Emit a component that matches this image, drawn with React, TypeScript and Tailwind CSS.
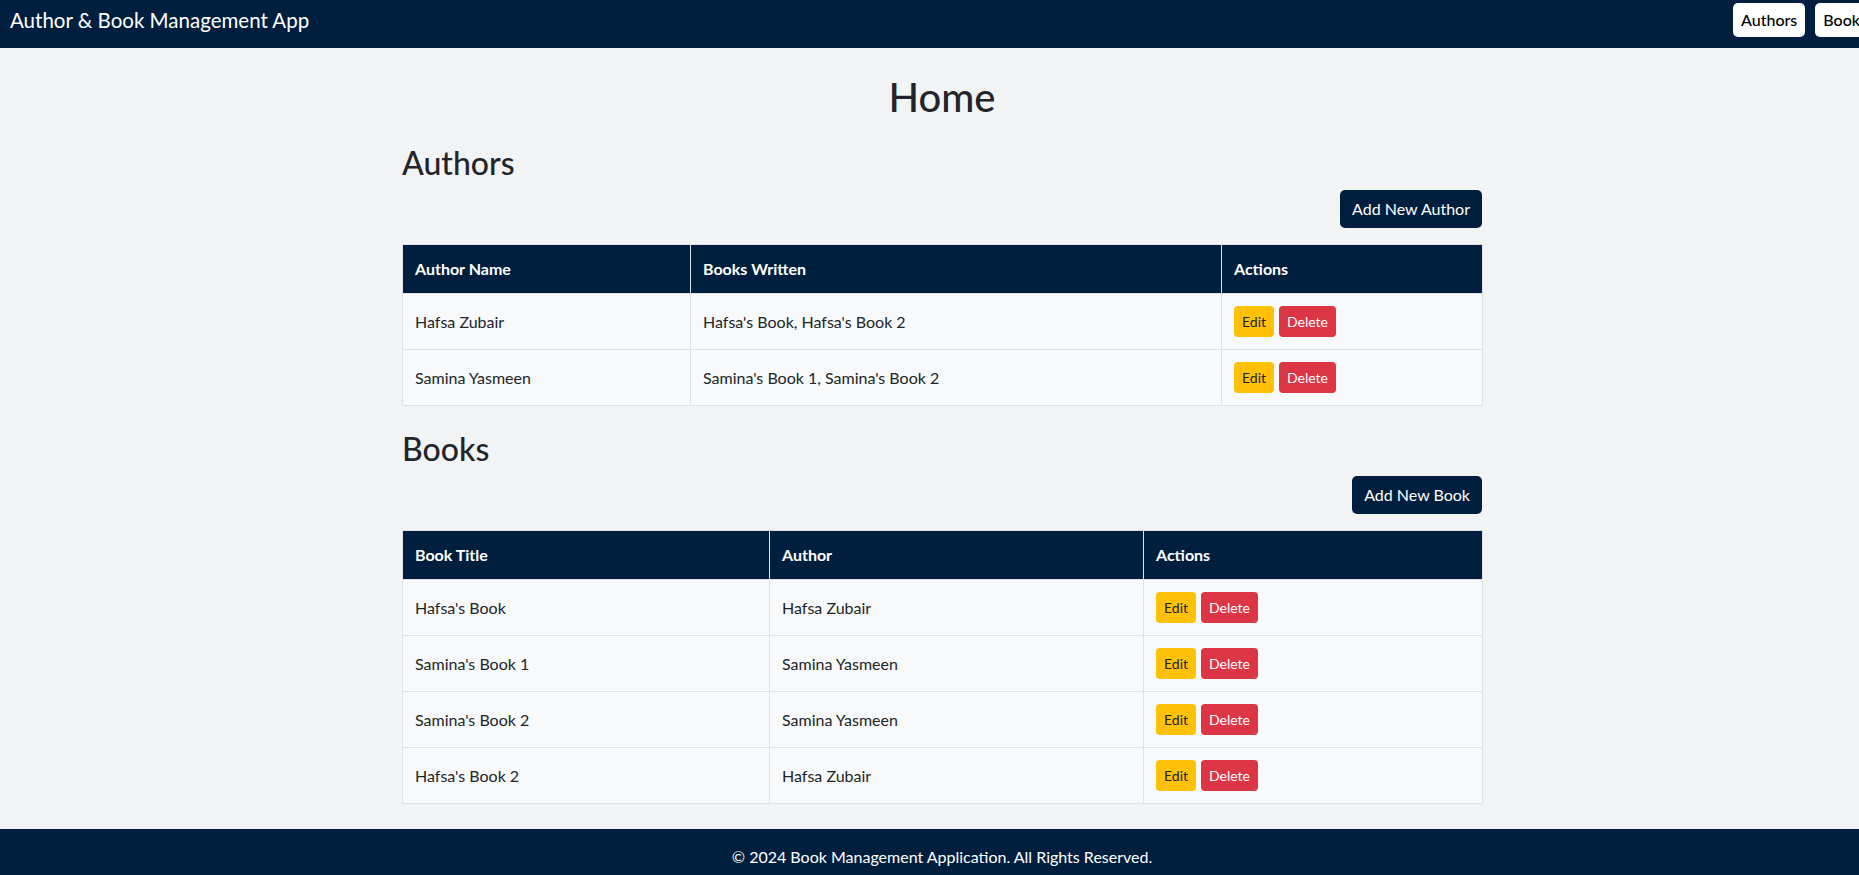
import React from 'react';

const authors = [
  { id: 1, name: 'Hafsa Zubair', books: "Hafsa's Book, Hafsa's Book 2" },
  { id: 2, name: 'Samina Yasmeen', books: "Samina's Book 1, Samina's Book 2" },
];

const books = [
  { id: 1, title: "Hafsa's Book", author: 'Hafsa Zubair' },
  { id: 2, title: "Samina's Book 1", author: 'Samina Yasmeen' },
  { id: 3, title: "Samina's Book 2", author: 'Samina Yasmeen' },
  { id: 4, title: "Hafsa's Book 2", author: 'Hafsa Zubair' },
];

function ActionButtons() {
  return (
    <div className="flex items-center gap-[5px]">
      <button className="h-[31px] px-2 rounded-[4px] bg-[#ffc107] text-[#212529] text-sm leading-[21px]">
        Edit
      </button>
      <button className="h-[31px] px-2 rounded-[4px] bg-[#dc3545] text-white text-sm leading-[21px]">
        Delete
      </button>
    </div>
  );
}

function HeadCell({ children, width }: { children: React.ReactNode; width: string }) {
  return (
    <th className={`${width} h-[49px] px-3 text-left font-bold text-white border border-[#dee2e6]`}>
      {children}
    </th>
  );
}

function Cell({ children }: { children: React.ReactNode }) {
  return <td className="h-[56px] px-3 border border-[#dee2e6] align-middle">{children}</td>;
}

export default function App() {
  return (
    <div className="w-full overflow-x-hidden">
      <div
        className="w-[1884px] min-h-screen flex flex-col bg-[#f2f3f5] text-[#212529] text-base"
        style={{ fontFamily: 'Lato, "Noto Sans", sans-serif' }}
      >
        <nav className="h-[48px] bg-[#001f3f] flex items-start justify-between pl-[10px] pr-[9px] pt-[3px]">
          <h1 className="text-white text-[20.5px] leading-[30px] mt-[2px]">Author &amp; Book Management App</h1>
          <div className="flex gap-[10px]">
            <button className="h-[34px] px-2 rounded-[5px] bg-white text-black font-medium">Authors</button>
            <button className="h-[34px] px-2 rounded-[5px] bg-white text-black font-medium">Books</button>
          </div>
        </nav>

        <main className="w-[1080px] mx-auto pt-[25px] flex-1">
          <h1 className="text-[40px] leading-[48px] text-center font-medium mb-[23px]">Home</h1>

          <section>
            <h2 className="text-[32px] leading-[38px] font-medium mb-2">Authors</h2>
            <div className="flex justify-end mb-4">
              <button className="h-[38px] px-3 rounded-[5px] bg-[#001f3f] text-white">Add New Author</button>
            </div>
            <table className="w-full table-fixed border-collapse bg-[#f8f9fa]">
              <thead className="bg-[#001f3f]">
                <tr>
                  <HeadCell width="w-[288px]">Author Name</HeadCell>
                  <HeadCell width="w-[531px]">Books Written</HeadCell>
                  <HeadCell width="w-[261px]">Actions</HeadCell>
                </tr>
              </thead>
              <tbody>
                {authors.map((a) => (
                  <tr key={a.id}>
                    <Cell>{a.name}</Cell>
                    <Cell>{a.books}</Cell>
                    <Cell>
                      <ActionButtons />
                    </Cell>
                  </tr>
                ))}
              </tbody>
            </table>
          </section>

          <section className="mt-[24px]">
            <h2 className="text-[32px] leading-[38px] font-medium mb-2">Books</h2>
            <div className="flex justify-end mb-4">
              <button className="h-[38px] px-3 rounded-[5px] bg-[#001f3f] text-white">Add New Book</button>
            </div>
            <table className="w-full table-fixed border-collapse bg-[#f8f9fa]">
              <thead className="bg-[#001f3f]">
                <tr>
                  <HeadCell width="w-[367px]">Book Title</HeadCell>
                  <HeadCell width="w-[374px]">Author</HeadCell>
                  <HeadCell width="w-[339px]">Actions</HeadCell>
                </tr>
              </thead>
              <tbody>
                {books.map((b) => (
                  <tr key={b.id}>
                    <Cell>{b.title}</Cell>
                    <Cell>{b.author}</Cell>
                    <Cell>
                      <ActionButtons />
                    </Cell>
                  </tr>
                ))}
              </tbody>
            </table>
          </section>
        </main>

        <footer className="mt-[25px] bg-[#001f3f] text-white text-center pt-[16px] pb-[16px] leading-6">
          © 2024 Book Management Application. All Rights Reserved.
        </footer>
      </div>
    </div>
  );
}
